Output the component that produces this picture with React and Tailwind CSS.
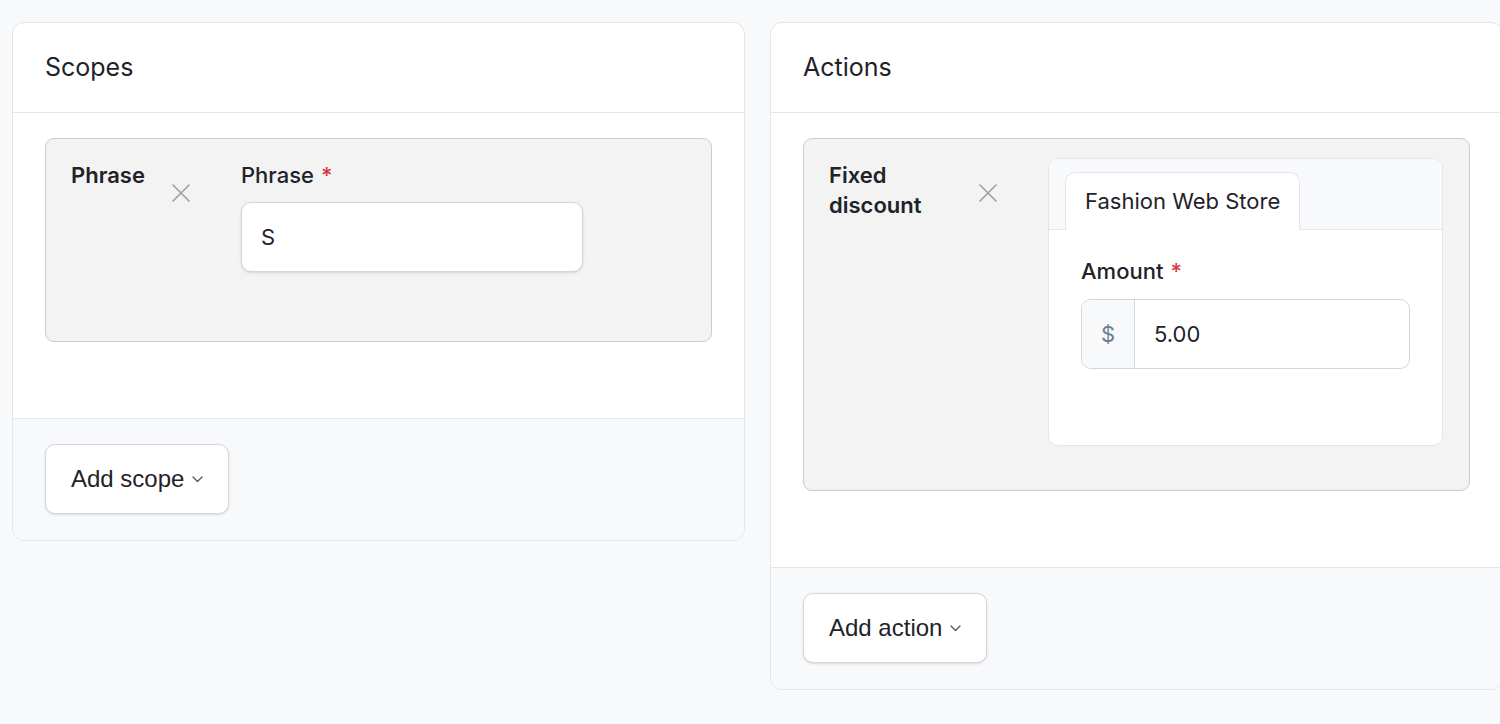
import React from "react";

const XIcon = () => (
  <svg width="18" height="18" viewBox="0 0 18 18" fill="none" stroke="#9e9e9e" strokeWidth="1.6" strokeLinecap="round">
    <path d="M1 1L17 17M17 1L1 17" />
  </svg>
);

const Chevron = () => (
  <svg width="11" height="7" viewBox="0 0 11 7" fill="none" stroke="#4b5563" strokeWidth="1.3" strokeLinecap="round" strokeLinejoin="round">
    <path d="M1 1L5.5 5.5L10 1" />
  </svg>
);

const Req = () => <span className="ml-[7px] text-[#dc3545]">*</span>;

function Card({ title, children, button }) {
  return (
    <div className="w-[733px] shrink-0 rounded-[12px] border border-[#e3e6ea] bg-white overflow-hidden">
      <div className="h-[90px] flex items-center px-[32px] border-b border-[#e3e6ea]">
        <h2 className="text-[25px] text-[#1f2328] font-normal">{title}</h2>
      </div>
      <div className="px-[32px] pt-[25px] pb-[76px]">{children}</div>
      <div className="border-t border-[#e3e6ea] bg-[#f8f9fa] px-[32px] pt-[25px] pb-[26px]">
        <button className="h-[70px] w-[184px] flex items-center pl-[25px] gap-[8px] rounded-[10px] border border-[#d3d6dc] bg-white shadow-sm text-[24px] text-[#1f2328] [font-family:'Liberation_Sans',Arial,sans-serif]">
          {button}
          <Chevron />
        </button>
      </div>
    </div>
  );
}

export default function App() {
  return (
    <div className="w-full min-h-[724px] overflow-hidden bg-[#f8f9fa] [font-family:Inter,'Noto_Sans',sans-serif] text-[#1f2328]">
      <div className="flex gap-[25px] pt-[22px] pl-[12px] items-start">
        <Card title="Scopes" button="Add scope">
          <div className="flex rounded-[9px] border border-[#cbcbcb] bg-[#f3f3f3] pl-[25px] pr-[25px] pt-[21px] pb-[69px]">
            <div className="w-[119px] shrink-0 flex justify-between">
              <div className="text-[22px] leading-[30px] font-semibold">Phrase</div>
              <div className="mt-[24px]"><XIcon /></div>
            </div>
            <div className="ml-[51px]">
              <div className="text-[22px] leading-[30px] font-medium">Phrase<Req /></div>
              <div className="mt-[12px] h-[70px] w-[342px] rounded-[10px] border border-[#d3d6dc] bg-white shadow-sm flex items-center pl-[19px] text-[22px]">S</div>
            </div>
          </div>
        </Card>
        <Card title="Actions" button="Add action">
          <div className="flex rounded-[9px] border border-[#cbcbcb] bg-[#f3f3f3] pl-[25px] pr-[25px] pt-[19px] pb-[44px]">
            <div className="w-[168px] shrink-0 flex justify-between pt-[2px]">
              <div className="w-[120px] text-[22px] leading-[30px] font-semibold">Fixed discount</div>
              <div className="mt-[24px]"><XIcon /></div>
            </div>
            <div className="ml-[51px] w-[395px] rounded-[10px] border border-[#e3e6ea] bg-white overflow-hidden">
              <div className="bg-[#f8f9fa] pt-[13px] pl-[16px] flex border-b border-[#e3e6ea]">
                <div className="-mb-px h-[58px] flex items-center px-[19px] bg-white border border-b-0 border-[#e3e6ea] rounded-t-[10px] text-[22px]">
                  Fashion Web Store
                </div>
              </div>
              <div className="pl-[32px] pr-[32px] pt-[26px] pb-[76px]">
                <div className="text-[22px] leading-[30px] font-medium">Amount<Req /></div>
                <div className="mt-[13px] h-[70px] flex rounded-[10px] border border-[#d3d6dc] overflow-hidden">
                  <div className="w-[53px] shrink-0 bg-[#f8f9fa] border-r border-[#d3d6dc] flex items-center justify-center text-[22px] text-[#6b7c93]">$</div>
                  <div className="flex-1 flex items-center pl-[19px] text-[22px]">5.00</div>
                </div>
              </div>
            </div>
          </div>
        </Card>
      </div>
    </div>
  );
}
